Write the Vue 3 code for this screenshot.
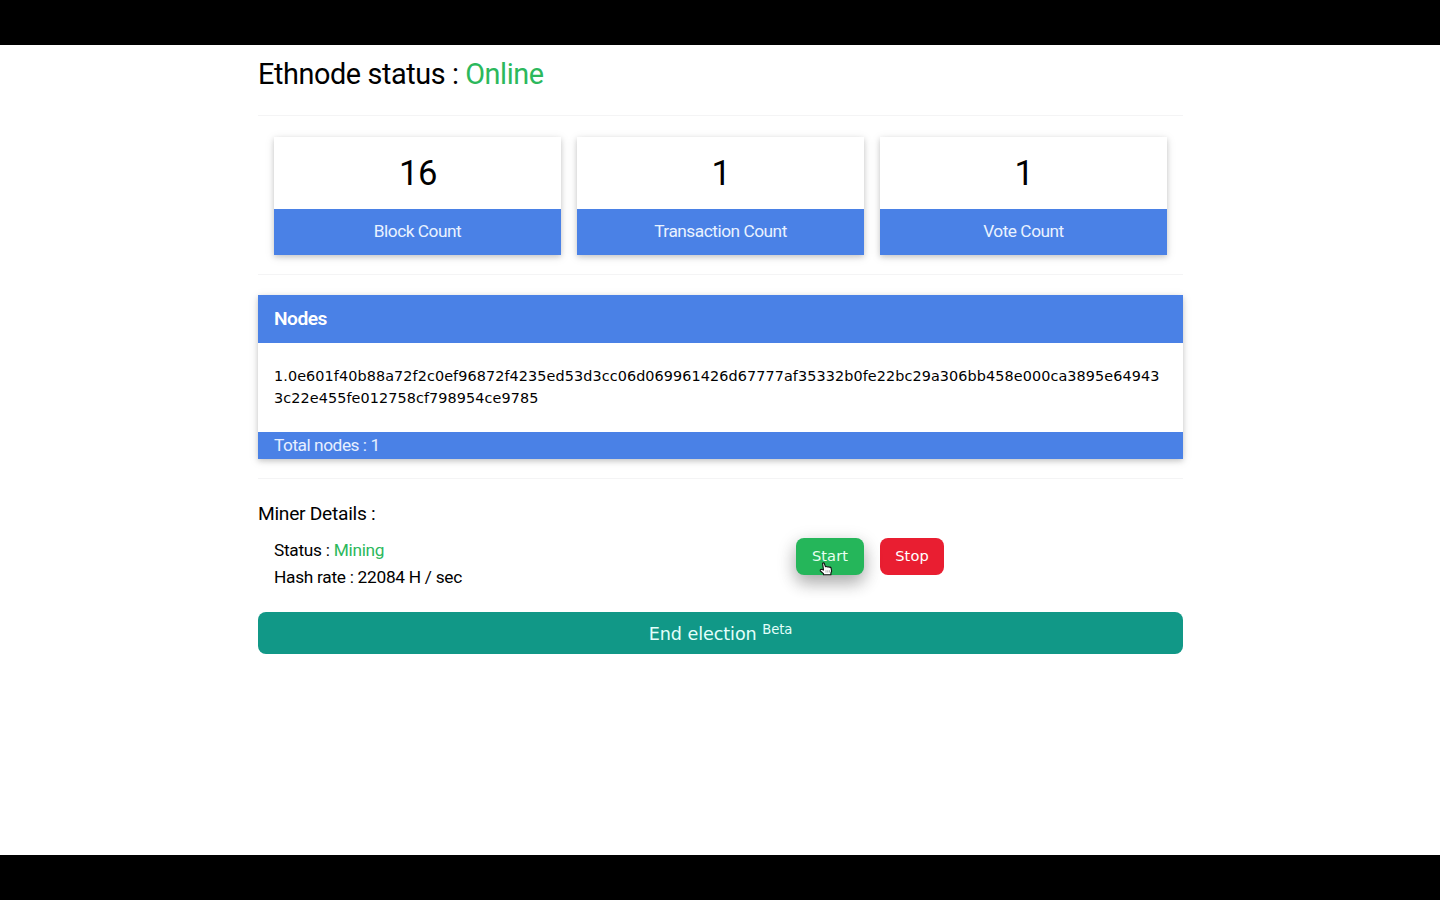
<script setup>
const stats = [
  { value: '16', label: 'Block Count', cls: 'block' },
  { value: '1', label: 'Transaction Count', cls: 'transaction' },
  { value: '1', label: 'Vote Count', cls: 'vote' },
]
const nodes = [
  '0e601f40b88a72f2c0ef96872f4235ed53d3cc06d069961426d67777af35332b0fe22bc29a306bb458e000ca3895e649433c22e455fe012758cf798954ce9785',
]
</script>

<template>
  <div class="screen">
    <main class="content">
      <h2 class="title">Ethnode status : <span class="green">Online</span></h2>
      <hr />
      <section class="stats">
        <article v-for="s in stats" :key="s.label" class="card">
          <div class="value">{{ s.value }}</div>
          <div class="label" :class="s.cls">{{ s.label }}</div>
        </article>
      </section>
      <hr />
      <section class="card nodes">
        <header>Nodes</header>
        <div class="list">
          <p v-for="(n, i) in nodes" :key="n">{{ i + 1 }}.{{ n }}</p>
        </div>
        <footer>Total nodes : {{ nodes.length }}</footer>
      </section>
      <hr />
      <h4 class="miner-title">Miner Details :</h4>
      <section class="miner">
        <div class="details">
          <p class="status">Status : <span class="green">Mining</span></p>
          <p class="rate">Hash rate : 22084 H / sec</p>
        </div>
        <button class="start">Start
          <svg class="cursor" width="14" height="14" viewBox="0 0 14 14">
            <path d="M3.6 1.4Q4.6 .3 5.3 1.4L6.4 4.7Q7.5 4.1 8.2 5Q9.4 4.4 10 5.3Q11.6 4.7 12.1 6L12.6 9.2L11.9 11V12.7H4.5V11.6L1.4 9Q.9 7.5 2.4 7.3L4.5 8.1Z" fill="#fff" stroke="#111" stroke-width="1.1" stroke-linejoin="round" />
            <path d="M7 8.2v2.4M8.8 8.2v2.4M10.4 8.2v2.4" stroke="#666" stroke-width=".5" />
          </svg>
        </button>
        <button class="stop">Stop</button>
      </section>
      <button class="end">End election <sup>Beta</sup></button>
    </main>
  </div>
</template>

<style>
body { margin: 0; background: #fff; }
</style>

<style scoped>
* { box-sizing: border-box; }
.screen {
  height: 900px;
  border-top: 45px solid #000;
  border-bottom: 45px solid #000;
  background: #fff;
  color: #000;
  font-family: Roboto, "Open Sans", sans-serif;
  overflow: hidden;
}
.content { width: 925px; margin-left: 258px; }
h2, h4, p { margin: 0; font-weight: 400; }
.green { color: #2cb85c; }
.title { height: 70px; padding-top: 9px; font-size: 28.8px; line-height: 40px; letter-spacing: -.4px; white-space: nowrap; }
hr { height: 1px; margin: 0; border: 0; background: #f4f4f5; }
.card { background: #fff; box-shadow: 0 2px 5px rgba(0, 0, 0, .16), 0 2px 10px rgba(0, 0, 0, .1); }
.stats { display: grid; grid-template-columns: repeat(3, 287px); gap: 16px; padding: 20.5px 16px 19px; height: 158px; }
.stats .card { height: 118.5px; }
.value { height: 72px; text-align: center; font-size: 34.6px; line-height: 72px; letter-spacing: -.6px; text-indent: .8px; }
.label { height: 46.5px; background: #4a81e6; color: #e9f2ff; text-align: center; font-size: 17.3px; line-height: 45px; letter-spacing: -.48px; }
.nodes { margin: 20px 0 19px; height: 164px; }
.nodes header { height: 48.4px; padding-left: 16px; background: #4a81e6; color: #fff; font-size: 19.2px; font-weight: 600; line-height: 48px; letter-spacing: -.5px; }
.list { height: 88.6px; padding: 21.6px 16px 0; font: 14.4px/22px Verdana, "DejaVu Sans", sans-serif; letter-spacing: .085px; word-break: break-all; }
.nodes footer { height: 27px; padding-left: 16px; background: #4a81e6; color: #e6efff; font-size: 17.3px; line-height: 27px; letter-spacing: -.46px; }
.miner-title { height: 59px; padding-top: 20px; font-size: 19.2px; line-height: 29px; letter-spacing: -.28px; }
.miner { display: flex; height: 74px; padding-left: 16px; }
.details { width: 522px; font-size: 17.3px; line-height: 26px; letter-spacing: -.28px; }
.status { height: 26px; line-height: 25px; }
button { border: 0; padding: 0; border-radius: 8px; color: #fff; font-family: Verdana, "DejaVu Sans", sans-serif; }
.start, .stop { height: 37px; padding-bottom: 1px; font-size: 14.6px; line-height: 36px; letter-spacing: .08px; }
.start { position: relative; width: 68px; margin-right: 16px; background: #25b65a; color: #e8fff0; box-shadow: 0 8px 16px rgba(0, 0, 0, .2), 0 6px 20px rgba(0, 0, 0, .19); }
.stop { width: 64px; background: #e91e31; }
.cursor { position: absolute; left: 23px; top: 24px; }
.end { display: block; width: 925px; height: 42px; padding-top: 2px; background: #119887; color: #e3fffb; font-size: 17.6px; line-height: 40px; letter-spacing: -.08px; }
sup { font-size: 75%; line-height: 0; position: relative; top: -.45em; vertical-align: baseline; }
</style>
